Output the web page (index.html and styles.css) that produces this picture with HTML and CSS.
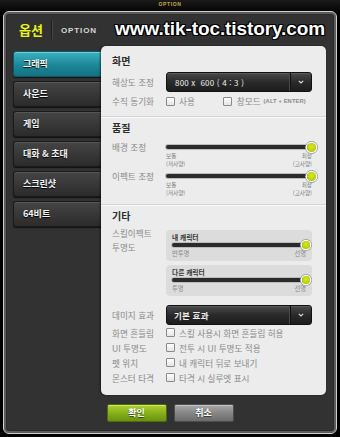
FILE: index.html
```html
<!DOCTYPE html>
<html lang="ko">
<head>
<meta charset="utf-8">
<title>옵션</title>
<link rel="stylesheet" href="styles.css">
</head>
<body>
<div class="topbar"><span>OPTION</span></div>
<div class="frame">
  <div class="header">
    <span class="title">옵션</span>
    <span class="vsep"></span>
    <span class="eng">OPTION</span>
    <span class="url">www.tik-toc.tistory.com</span>
  </div>
  <div class="main">
    <nav class="tabs">
      <div class="tab active">그래픽</div>
      <div class="tab">사운드</div>
      <div class="tab">게임</div>
      <div class="tab">대화 &amp; 초대</div>
      <div class="tab">스크린샷</div>
      <div class="tab">64비트</div>
    </nav>
    <div class="panel">
      <section class="sec sec1">
        <h3 class="sec-title">화면</h3>
        <div class="row row-select">
          <span class="lbl">해상도 조정</span>
          <div class="select"><span class="select-text">800 x&nbsp; 600 ( 4 : 3 )</span><span class="select-arrow"><svg width="6" height="4" viewBox="0 0 6 4"><path d="M0.8 0.8 L3 3 L5.2 0.8" fill="none" stroke="#ddd" stroke-width="1.1"/></svg></span></div>
        </div>
        <div class="row row-chk">
          <span class="lbl">수직 동기화</span>
          <span class="chk"><i class="box"></i>사용</span>
          <span class="chk chk-win"><i class="box"></i>창모드<small>(ALT + ENTER)</small></span>
        </div>
      </section>
      <section class="sec sec2">
        <h3 class="sec-title">품질</h3>
        <div class="slider-group">
          <div class="row row-slider">
            <span class="lbl">배경 조정</span>
            <div class="slider"><div class="track"></div><i class="thumb"></i></div>
          </div>
          <div class="sublabels"><span>보통<br>(저사양)</span><span class="r">최상<br>(고사양)</span></div>
        </div>
        <div class="slider-group g2">
          <div class="row row-slider">
            <span class="lbl">이펙트 조정</span>
            <div class="slider"><div class="track"></div><i class="thumb"></i></div>
          </div>
          <div class="sublabels"><span>보통<br>(저사양)</span><span class="r">최상<br>(고사양)</span></div>
        </div>
      </section>
      <section class="sec sec3">
        <h3 class="sec-title">기타</h3>
        <div class="row row-skill">
          <span class="lbl lbl-multi">스킬이펙트<br>투명도</span>
          <div class="boxes">
            <div class="sbox">
              <div class="sbox-title">내 캐릭터</div>
              <div class="slider sm"><div class="track"></div><i class="thumb"></i></div>
              <div class="sbox-foot"><span>반투명</span><span>선명</span></div>
            </div>
            <div class="sbox">
              <div class="sbox-title">다른 캐릭터</div>
              <div class="slider sm"><div class="track"></div><i class="thumb"></i></div>
              <div class="sbox-foot"><span>투명</span><span>선명</span></div>
            </div>
          </div>
        </div>
        <div class="row row-select dmg">
          <span class="lbl">데미지 효과</span>
          <div class="select"><span class="select-text bold">기본 효과</span><span class="select-arrow"><svg width="6" height="4" viewBox="0 0 6 4"><path d="M0.8 0.8 L3 3 L5.2 0.8" fill="none" stroke="#ddd" stroke-width="1.1"/></svg></span></div>
        </div>
        <div class="row row-opt"><span class="lbl">화면 흔들림</span><span class="chk"><i class="box"></i>스킬 사용시 화면 흔들림 허용</span></div>
        <div class="row row-opt"><span class="lbl">UI 투명도</span><span class="chk"><i class="box"></i>전투 시 UI 투명도 적용</span></div>
        <div class="row row-opt"><span class="lbl">펫 위치</span><span class="chk"><i class="box"></i>내 캐릭터 뒤로 보내기</span></div>
        <div class="row row-opt"><span class="lbl">몬스터 타격</span><span class="chk"><i class="box"></i>타격 시 실루엣 표시</span></div>
      </section>
    </div>
  </div>
  <div class="actions">
    <button class="btn ok">확인</button>
    <button class="btn cancel">취소</button>
  </div>
</div>
</body>
</html>
```

FILE: styles.css
```css
* { box-sizing: border-box; }
html, body { margin: 0; padding: 0; }
body {
  width: 340px;
  height: 437px;
  overflow: hidden;
  background: #000;
  font-family: "Noto Sans CJK KR", "Noto Sans", sans-serif;
}
.topbar {
  height: 11px;
  display: flex;
  justify-content: center;
  align-items: flex-start;
  background: linear-gradient(#1a1a1a, #050505);
}
.topbar span {
  font-family: "Liberation Sans", sans-serif;
  font-weight: bold;
  font-size: 5px;
  line-height: 8px;
  letter-spacing: 0.6px;
  color: #c9a93a;
}
.frame {
  margin: 0 3px;
  height: 423px;
  border: 1px solid #cfcfcf;
  border-radius: 6px;
  background: #323232;
  box-shadow: inset 0 0 0 2px #5c5c5c, inset 0 0 0 3px #2a2a2a;
  display: flex;
  flex-direction: column;
}
.header {
  height: 34px;
  display: flex;
  align-items: center;
  padding: 0 11px 0 15px;
}
.title {
  color: #e8f21c;
  font-weight: bold;
  font-size: 13px;
  line-height: 16px;
  margin-top: 2px;
}
.vsep {
  width: 2px;
  height: 18px;
  margin: 2px 0 0 8px;
  border-left: 1px solid #1e1e1e;
  border-right: 1px solid #464646;
}
.eng {
  margin: 2px 0 0 8px;
  font-family: "Liberation Sans", sans-serif;
  font-weight: bold;
  font-size: 8px;
  letter-spacing: 0.9px;
  color: #d8d8d8;
}
.url {
  margin-left: auto;
  font-family: "Liberation Sans", sans-serif;
  font-weight: bold;
  font-size: 19px;
  line-height: 20px;
  color: #fff;
  letter-spacing: -0.1px;
  text-shadow: 1px 0 0 #000, -1px 0 0 #000, 0 1px 0 #000, 0 -1px 0 #000, 1px 1px 0 #000, -1px -1px 0 #000, 1px -1px 0 #000, -1px 1px 0 #000;
}
.main {
  display: flex;
  height: 349px;
  padding-left: 9px;
}
.tabs {
  width: 88px;
  padding-top: 5px;
  display: flex;
  flex-direction: column;
  gap: 4px;
}
.tab {
  height: 26px;
  border: 1px solid #1a1a1a;
  border-right: none;
  border-radius: 3px 0 0 3px;
  background: linear-gradient(#454545, #2b2b2b);
  box-shadow: inset 0 1px 0 #575757, 0 1px 1px #111;
  color: #f2f2f2;
  font-weight: bold;
  font-size: 9px;
  line-height: 24px;
  padding-left: 9px;
  text-shadow: 0 1px 1px #000;
}
.tab.active {
  background: linear-gradient(#3db2c2, #1c8797 55%, #137282);
  border-color: #0e5864;
  box-shadow: inset 0 1px 0 #6fd0dc, 0 1px 1px #111;
}
.panel {
  width: 225px;
  height: 349px;
  background: #ececec;
  border-radius: 5px;
  box-shadow: -1px 0 2px rgba(0,0,0,0.5);
  padding: 0 14px 0 11px;
  display: flex;
  flex-direction: column;
}
.sec { border-bottom: 1px solid #d2d2d2; box-shadow: 0 1px 0 #fafafa; margin: 0 -14px 0 -11px; padding-left: 11px; padding-right: 14px; }
.sec3 { border-bottom: none; box-shadow: none; }
.sec-title {
  margin: 0;
  height: 14px;
  font-size: 10px;
  line-height: 14px;
  font-weight: bold;
  color: #2c2c2c;
}
.sec1 { padding-top: 8px; padding-bottom: 9px; }
.sec2 { padding-top: 4px; padding-bottom: 7px; }
.sec3 { padding-top: 4px; }
.row { display: flex; align-items: center; }
.lbl {
  width: 54px;
  flex: none;
  font-size: 8.6px;
  color: #8a8a8a;
  white-space: nowrap;
  line-height: 12px;
}
.row-select { height: 20px; margin-top: 4px; }
.row-chk { height: 12px; margin-top: 3px; }
.select {
  flex: 1;
  height: 20px;
  border-radius: 3px;
  border: 1px solid #111;
  background: linear-gradient(#4a4a4a, #2a2a2a 50%, #1d1d1d);
  box-shadow: inset 0 1px 0 #5a5a5a;
  display: flex;
  align-items: center;
}
.select-text {
  flex: 1;
  padding-left: 8px;
  font-size: 8px;
  color: #f0f0f0;
  letter-spacing: 0.2px;
  white-space: pre;
}
.select-text.bold { font-weight: bold; font-size: 8.5px; padding-left: 7px; }
.select-arrow {
  width: 21px;
  height: 18px;
  border-left: 1px solid #111;
  box-shadow: -1px 0 0 #4a4a4a;
  display: flex;
  align-items: center;
  justify-content: center;
}
.chk {
  display: flex;
  align-items: center;
  font-size: 8.6px;
  color: #8a8a8a;
  line-height: 12px;
  white-space: nowrap;
}
.chk .box {
  width: 9px;
  height: 9px;
  border: 1px solid #8a8a8a;
  background: linear-gradient(#fff, #e4e4e4);
  border-radius: 1px;
  margin-right: 4px;
  flex: none;
}
.chk-win { margin-left: 28px; }
.chk-win .box { margin-right: 5px; }
.chk small {
  font-family: "Liberation Sans", sans-serif;
  font-size: 5.8px;
  font-weight: bold;
  margin-left: 3px;
  color: #8a8a8a;
  letter-spacing: 0.1px;
}
.slider-group { margin-top: 6px; }
.slider-group.g2 { margin-top: 2px; }
.row-slider { height: 12px; }
.slider {
  position: relative;
  flex: none;
  width: 145px;
  height: 9px;
  display: flex;
  align-items: center;
}
.track {
  width: 100%;
  height: 4px;
  border-radius: 2px;
  background: #2b2b2b;
  box-shadow: 0 0 0 1px #bdbdbd;
}
.thumb {
  position: absolute;
  right: -4.5px;
  top: 0;
  width: 9px;
  height: 9px;
  border-radius: 50%;
  background: radial-gradient(circle at 50% 40%, #d8ea1a, #a6c000);
  box-shadow: 0 0 0 1.3px #fff, 0 0 0 2px #999;
}
.sublabels {
  margin-left: 54px;
  margin-top: -1px;
  width: 146px;
  height: 16px;
  display: flex;
  justify-content: space-between;
  font-size: 5.6px;
  line-height: 8px;
  color: #7a7a7a;
}
.sublabels .r { text-align: right; }
.row-skill { align-items: flex-start; margin-top: 7px; }
.lbl-multi { margin-top: -4px; line-height: 14px; }
.boxes { display: flex; flex-direction: column; gap: 4px; width: 146px; }
.sbox {
  height: 31px;
  border-radius: 4px;
  background: #dcdcdc;
  padding: 3px 6px 0 6px;
}
.sbox-title {
  font-size: 6.7px;
  font-weight: bold;
  color: #333;
  line-height: 8px;
  height: 8px;
}
.slider.sm { width: 134px; height: 8px; margin-top: 0; }
.slider.sm .thumb { width: 8px; height: 8px; right: -4px; }
.sbox-foot {
  display: flex;
  justify-content: space-between;
  font-size: 6.3px;
  line-height: 8px;
  color: #8a8a8a;
  margin-top: 1px;
  padding-right: 0;
}
.dmg { margin-top: 9px; }
.row-opt { height: 15px; }
.actions {
  display: flex;
  justify-content: center;
  gap: 7px;
  margin-top: 9px;
}
.btn {
  width: 60px;
  height: 18px;
  padding: 0;
  border-radius: 2px;
  font-family: "Noto Sans CJK KR", sans-serif;
  font-weight: bold;
  font-size: 9px;
  line-height: 16px;
  color: #fff;
  text-shadow: 0 1px 1px rgba(0,0,0,0.6);
}
.btn.ok {
  border: 1px solid #4f6c0c;
  background: linear-gradient(#b0d232, #87b01a 50%, #6a9210);
  box-shadow: inset 0 1px 0 #cfe86a;
}
.btn.cancel {
  border: 1px solid #4e4e4e;
  background: linear-gradient(#a8a8a8, #868686 50%, #6c6c6c);
  box-shadow: inset 0 1px 0 #c4c4c4;
}
```
